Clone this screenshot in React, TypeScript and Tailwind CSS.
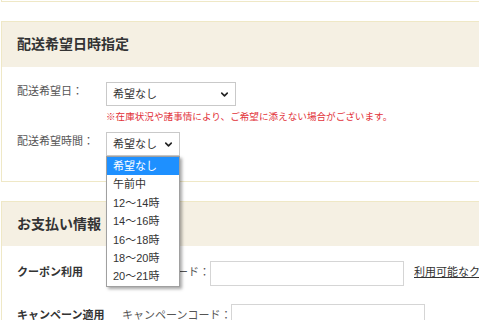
import { ChevronDown } from "lucide-react";

const font = { fontFamily: '"Liberation Sans", "Noto Sans CJK JP", sans-serif' };

const timeOptions = ["希望なし", "午前中", "12〜14時", "14〜16時", "16〜18時", "18〜20時", "20〜21時"];

function FakeSelect({ width, open }: { width: string; open?: boolean }) {
  return (
    <div className={`relative ${width}`}>
      <div className="flex h-[24px] items-center justify-between border border-[#c9c9c9] bg-white pl-[6px] pr-[5px] text-[11px] text-[#333]">
        <span>希望なし</span>
        <ChevronDown size={11} strokeWidth={3.5} className="text-[#222]" />
      </div>

      {/* open list */}
      {open && (
        <div className="absolute left-0 top-full z-10 w-full border border-[#a0a0a0] bg-white shadow-[2px_2px_3px_rgba(0,0,0,0.35)]">
          {timeOptions.map((opt, i) => (
            <div
              key={opt}
              className={`pl-[6px] text-[11px] leading-[18.4px] ${
                i === 0 ? "bg-[#1e90ff] text-white" : "text-[#333]"
              }`}
            >
              {opt}
            </div>
          ))}
        </div>
      )}
    </div>
  );
}

export default function App() {
  return (
    <div className="relative h-[320px] w-[479px] overflow-hidden bg-white" style={font}>
      {/* tail of the panel above */}
      <div className="ml-px h-[2px] w-[600px] border-b border-l border-[#efe8c6]"></div>

      {/* DELIVERY */}
      <div className="ml-px mt-[19px] w-[600px] border border-[#efe8c6]">
        <div className="flex h-[45px] items-center bg-[#f5f0e3] pl-[15px]">
          <h2 className="text-[14px] font-bold text-[#333]">配送希望日時指定</h2>
        </div>

        <div className="pb-[25px] pl-[15px] pt-[15px]">
          <div className="flex">
            <label className="w-[89px] shrink-0 text-[11px] leading-[18px] text-[#555]">配送希望日：</label>
            <div>
              <FakeSelect width="w-[130px]" />
              <p className="mt-[4px] whitespace-nowrap text-[9.6px] leading-[14px] text-[#e2323a]">
                ※在庫状況や諸事情により、ご希望に添えない場合がございます。
              </p>
            </div>
          </div>

          <div className="mt-[8px] flex">
            <label className="w-[89px] shrink-0 text-[11px] leading-[18px] text-[#555]">配送希望時間：</label>
            <FakeSelect width="w-[74px]" open />
          </div>
        </div>
      </div>

      {/* PAYMENT */}
      <div className="ml-px mt-[19px] w-[600px] border border-[#efe8c6]">
        <div className="flex h-[44px] items-center bg-[#f5f0e3] pl-[15px]">
          <h2 className="text-[14px] font-bold text-[#333]">お支払い情報</h2>
        </div>

        <div className="pb-[20px] pl-[15px] pt-[15px]">
          <div className="flex items-start whitespace-nowrap">
            <span className="w-[105px] shrink-0 pt-[2px] text-[11px] font-bold leading-[18px] text-[#333]">
              クーポン利用
            </span>
            <span className="shrink-0 pt-[2px] text-[11px] leading-[18px] text-[#555]">クーポンコード：</span>
            <input className="h-[25px] w-[194px] shrink-0 border border-[#d5d5d5] bg-white outline-none" />
            <a className="ml-[10px] shrink-0 pt-[2px] text-[11px] leading-[18px] text-[#333] underline">
              利用可能なクーポンはこちら
            </a>
          </div>

          <div className="mt-[18px] flex items-start whitespace-nowrap">
            <span className="w-[105px] shrink-0 pt-[2px] text-[11px] font-bold leading-[18px] text-[#333]">
              キャンペーン適用
            </span>
            <span className="shrink-0 pt-[2px] text-[11px] leading-[18px] text-[#555]">キャンペーンコード：</span>
            <input className="h-[25px] w-[194px] shrink-0 border border-[#d5d5d5] bg-white outline-none" />
          </div>
        </div>
      </div>
    </div>
  );
}
